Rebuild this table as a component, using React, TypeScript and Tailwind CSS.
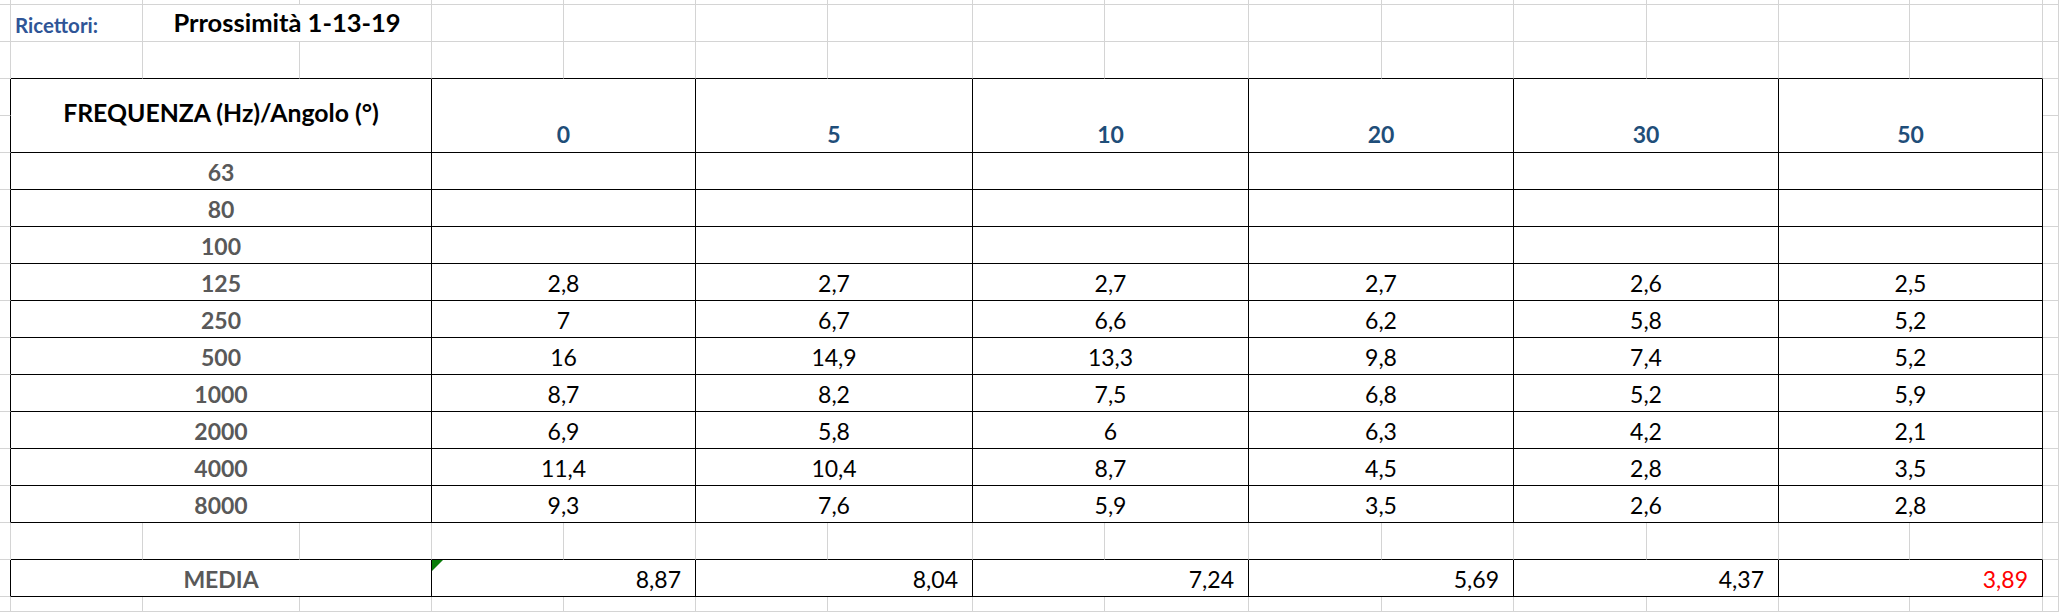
import React from 'react';

type Edge = 'k' | 'g';

interface CellProps {
  span?: 1 | 2 | 3;
  tall?: boolean;
  r?: Edge;
  b?: Edge;
  className?: string;
  children?: React.ReactNode;
}

const spanCls = { 1: 'col-span-1', 2: 'col-span-2', 3: 'col-span-3' };
const rightCls = { k: 'border-r-black', g: 'border-r-[#d4d4d4]' };
const bottomCls = { k: 'border-b-black', g: 'border-b-[#d4d4d4]' };

const Cell: React.FC<CellProps> = ({ span = 1, tall = false, r = 'g', b = 'g', className = '', children }) => (
  <div
    className={`${spanCls[span]} ${tall ? 'row-span-2' : ''} border-r border-b ${rightCls[r]} ${bottomCls[b]} flex min-w-0 whitespace-nowrap leading-none ${className}`}
  >
    {children}
  </div>
);

// 17 sheet columns, widths measured off the screenshot
const COLS = 17;

const blanks = (n: number, b: Edge = 'g', key = '') =>
  Array.from({ length: n }, (_, i) => <Cell key={key + i} b={b} />);

const angles = ['0', '5', '10', '20', '30', '50'];

const rows: { f: string; v: string[] }[] = [
  { f: '63', v: [] },
  { f: '80', v: [] },
  { f: '100', v: [] },
  { f: '125', v: ['2,8', '2,7', '2,7', '2,7', '2,6', '2,5'] },
  { f: '250', v: ['7', '6,7', '6,6', '6,2', '5,8', '5,2'] },
  { f: '500', v: ['16', '14,9', '13,3', '9,8', '7,4', '5,2'] },
  { f: '1000', v: ['8,7', '8,2', '7,5', '6,8', '5,2', '5,9'] },
  { f: '2000', v: ['6,9', '5,8', '6', '6,3', '4,2', '2,1'] },
  { f: '4000', v: ['11,4', '10,4', '8,7', '4,5', '2,8', '3,5'] },
  { f: '8000', v: ['9,3', '7,6', '5,9', '3,5', '2,6', '2,8'] },
];

const media = ['8,87', '8,04', '7,24', '5,69', '4,37', '3,89'];

export default function App() {
  return (
    <div className="h-[612px] w-[2059px] overflow-hidden bg-white [font-family:Lato,'Open_Sans',sans-serif]">
      <div className="grid h-full grid-cols-[11px_132px_157px_132px_132px_132px_132px_145px_132px_144px_133px_132px_133px_132px_131px_133px_1fr] grid-rows-[5px_repeat(16,37px)_1fr]">
        {/* partial top row */}
        {blanks(COLS, 'g', 'top')}

        {/* Ricettori */}
        <Cell />
        <Cell className="items-end pb-[6px] pl-[4px] text-[20.5px] font-bold text-[#2f5597]">Ricettori:</Cell>
        <Cell span={2} className="items-end justify-center pb-[6px] text-[25.5px] font-bold text-black">
          Prrossimità 1-13-19
        </Cell>
        {blanks(COLS - 4, 'g', 'r1')}

        {/* spacer row, bottom edge is the table's top border */}
        <Cell />
        {Array.from({ length: 15 }, (_, i) => <Cell key={'r2' + i} b="k" />)}
        <Cell />

        {/* header */}
        <Cell r="k" />
        <Cell span={3} tall r="k" b="k" className="items-center justify-center pb-[4px] text-[24.8px] font-bold text-black">
          FREQUENZA (Hz)/Angolo (°)
        </Cell>
        {angles.map(a => (
          <Cell key={a} span={2} tall r="k" b="k" className="items-end justify-center pb-[6px] text-[23px] font-bold text-[#1f4e79]">
            {a}
          </Cell>
        ))}
        <Cell />
        <Cell r="k" />
        <Cell />

        {/* frequency rows */}
        {rows.map((row, ri) => (
          <React.Fragment key={row.f}>
            <Cell r="k" />
            <Cell span={3} r="k" b="k" className="items-end justify-center pb-[5px] text-[23px] font-bold text-[#595959]">
              {row.f}
            </Cell>
            {angles.map((a, i) => (
              <Cell key={a} span={2} r="k" b="k" className="items-end justify-center pb-[5px] text-[23px] text-black">
                {row.v[i] ?? ''}
              </Cell>
            ))}
            <Cell key={'q' + ri} />
          </React.Fragment>
        ))}

        {/* empty row above MEDIA */}
        <Cell />
        {Array.from({ length: 15 }, (_, i) => <Cell key={'e' + i} b="k" />)}
        <Cell />

        {/* MEDIA */}
        <Cell r="k" />
        <Cell span={3} r="k" b="k" className="items-end justify-center pb-[5px] text-[23px] font-bold text-[#595959]">
          MEDIA
        </Cell>
        {media.map((m, i) => (
          <Cell
            key={i}
            span={2}
            r="k"
            b="k"
            className={`relative items-end justify-end pb-[5px] pr-[14px] text-[23px] ${i === 5 ? 'text-[#ff0000]' : 'text-black'}`}
          >
            {i === 0 && (
              <span className="absolute left-0 top-0 h-0 w-0 border-t-[11px] border-r-[11px] border-t-[#0a7d0a] border-r-transparent" />
            )}
            {m}
          </Cell>
        ))}
        <Cell />

        {/* partial bottom row */}
        {blanks(COLS, 'g', 'bot')}
      </div>
    </div>
  );
}
